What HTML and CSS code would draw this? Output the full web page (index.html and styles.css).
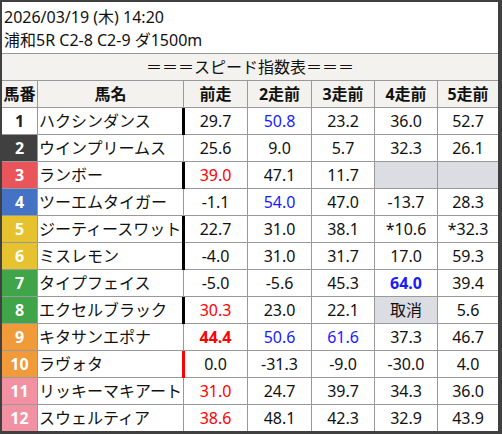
FILE: index.html
```html
<!DOCTYPE html>
<html lang="ja">
<head>
<meta charset="utf-8">
<title>スピード指数表</title>
<link rel="stylesheet" href="styles.css">
</head>
<body>
<div class="frame">
  <div class="info">
    <div>2026/03/19 (木) 14:20</div>
    <div>浦和5R C2-8 C2-9 ダ1500m</div>
  </div>
  <div class="sheet">
    <div class="c title last">＝＝＝スピード指数表＝＝＝</div>

    <div class="c hd">馬番</div><div class="c hd">馬名</div><div class="c hd">前走</div><div class="c hd">2走前</div><div class="c hd">3走前</div><div class="c hd">4走前</div><div class="c hd last">5走前</div>

    <div class="c no w1">1</div><div class="c nm">ハクシンダンス</div><div class="c mk">29.7</div><div class="c blue">50.8</div><div class="c">23.2</div><div class="c">36.0</div><div class="c last">52.7</div>

    <div class="c no w2">2</div><div class="c nm">ウインプリームス</div><div class="c">25.6</div><div class="c">9.0</div><div class="c">5.7</div><div class="c">32.3</div><div class="c last">26.1</div>

    <div class="c no w3">3</div><div class="c nm">ランボー</div><div class="c mk red">39.0</div><div class="c">47.1</div><div class="c">11.7</div><div class="c na"></div><div class="c na last"></div>

    <div class="c no w4">4</div><div class="c nm">ツーエムタイガー</div><div class="c">-1.1</div><div class="c blue">54.0</div><div class="c">47.0</div><div class="c">-13.7</div><div class="c last">28.3</div>

    <div class="c no w5">5</div><div class="c nm">ジーティースワット</div><div class="c mk">22.7</div><div class="c">31.0</div><div class="c">38.1</div><div class="c">*10.6</div><div class="c last">*32.3</div>

    <div class="c no w5">6</div><div class="c nm">ミスレモン</div><div class="c mk">-4.0</div><div class="c">31.0</div><div class="c">31.7</div><div class="c">17.0</div><div class="c last">59.3</div>

    <div class="c no w6">7</div><div class="c nm">タイプフェイス</div><div class="c">-5.0</div><div class="c">-5.6</div><div class="c">45.3</div><div class="c blue strong">64.0</div><div class="c last">39.4</div>

    <div class="c no w6">8</div><div class="c nm">エクセルブラック</div><div class="c mk red">30.3</div><div class="c">23.0</div><div class="c">22.1</div><div class="c na">取消</div><div class="c last">5.6</div>

    <div class="c no w7">9</div><div class="c nm">キタサンエポナ</div><div class="c red strong">44.4</div><div class="c blue">50.6</div><div class="c blue">61.6</div><div class="c">37.3</div><div class="c last">46.7</div>

    <div class="c no w7">10</div><div class="c nm">ラヴォタ</div><div class="c mk mk-red">0.0</div><div class="c">-31.3</div><div class="c">-9.0</div><div class="c">-30.0</div><div class="c last">4.0</div>

    <div class="c no w8">11</div><div class="c nm">リッキーマキアート</div><div class="c red">31.0</div><div class="c">24.7</div><div class="c">39.7</div><div class="c">34.3</div><div class="c last">36.0</div>

    <div class="c no w8">12</div><div class="c nm">スウェルティア</div><div class="c red">38.6</div><div class="c">48.1</div><div class="c">42.3</div><div class="c">32.9</div><div class="c last">43.9</div>
  </div>
</div>
</body>
</html>
```

FILE: styles.css
```css
html, body {
  margin: 0;
  padding: 0;
  background: #ffffff;
}

.frame {
  box-sizing: border-box;
  width: 502px;
  height: 434px;
  border-style: solid;
  border-color: #404040;
  border-width: 2px 4px 3px 2px;
  overflow: hidden;
  font-family: "Noto Sans", "Noto Sans CJK JP", sans-serif;
  font-size: 16px;
  color: #111111;
  background: #ffffff;
}

.info {
  box-sizing: border-box;
  height: 52px;
  padding: 4px 2px 0 2px;
  line-height: 23px;
  border-bottom: 1px solid #999999;
  white-space: nowrap;
}

.sheet {
  display: grid;
  grid-template-columns: 36px 146px 64px 64px 63px 63px 60px;
  grid-auto-rows: 27px;
}

.c {
  box-sizing: border-box;
  border-right: 1px solid #999999;
  border-bottom: 1px solid #999999;
  line-height: 26px;
  text-align: center;
  white-space: nowrap;
  overflow: hidden;
}

.last {
  border-right: none;
}

.title {
  grid-column: 1 / -1;
  background: #f3f2ee;
}

.hd {
  background: #f3f2ee;
  font-weight: bold;
}

.nm {
  text-align: left;
  padding-left: 1px;
}

.no {
  font-weight: bold;
  color: #ffffff;
}

.w1 { background: #ffffff; color: #222222; }
.w2 { background: #404040; }
.w3 { background: #e8555a; }
.w4 { background: #4472c4; }
.w5 { background: #e6c22e; }
.w6 { background: #3fa548; }
.w7 { background: #f09a3a; }
.w8 { background: #f191a1; }

.red { color: #ff0000; }
.blue { color: #1a1aff; }
.strong { font-weight: bold; }

.na { background: #dcdde2; }

.mk {
  position: relative;
  overflow: visible;
}

.mk::before {
  content: "";
  position: absolute;
  left: -2px;
  top: 0;
  bottom: -1px;
  width: 3px;
  background: #000000;
}

.mk-red::before {
  background: #ff0000;
}
```
